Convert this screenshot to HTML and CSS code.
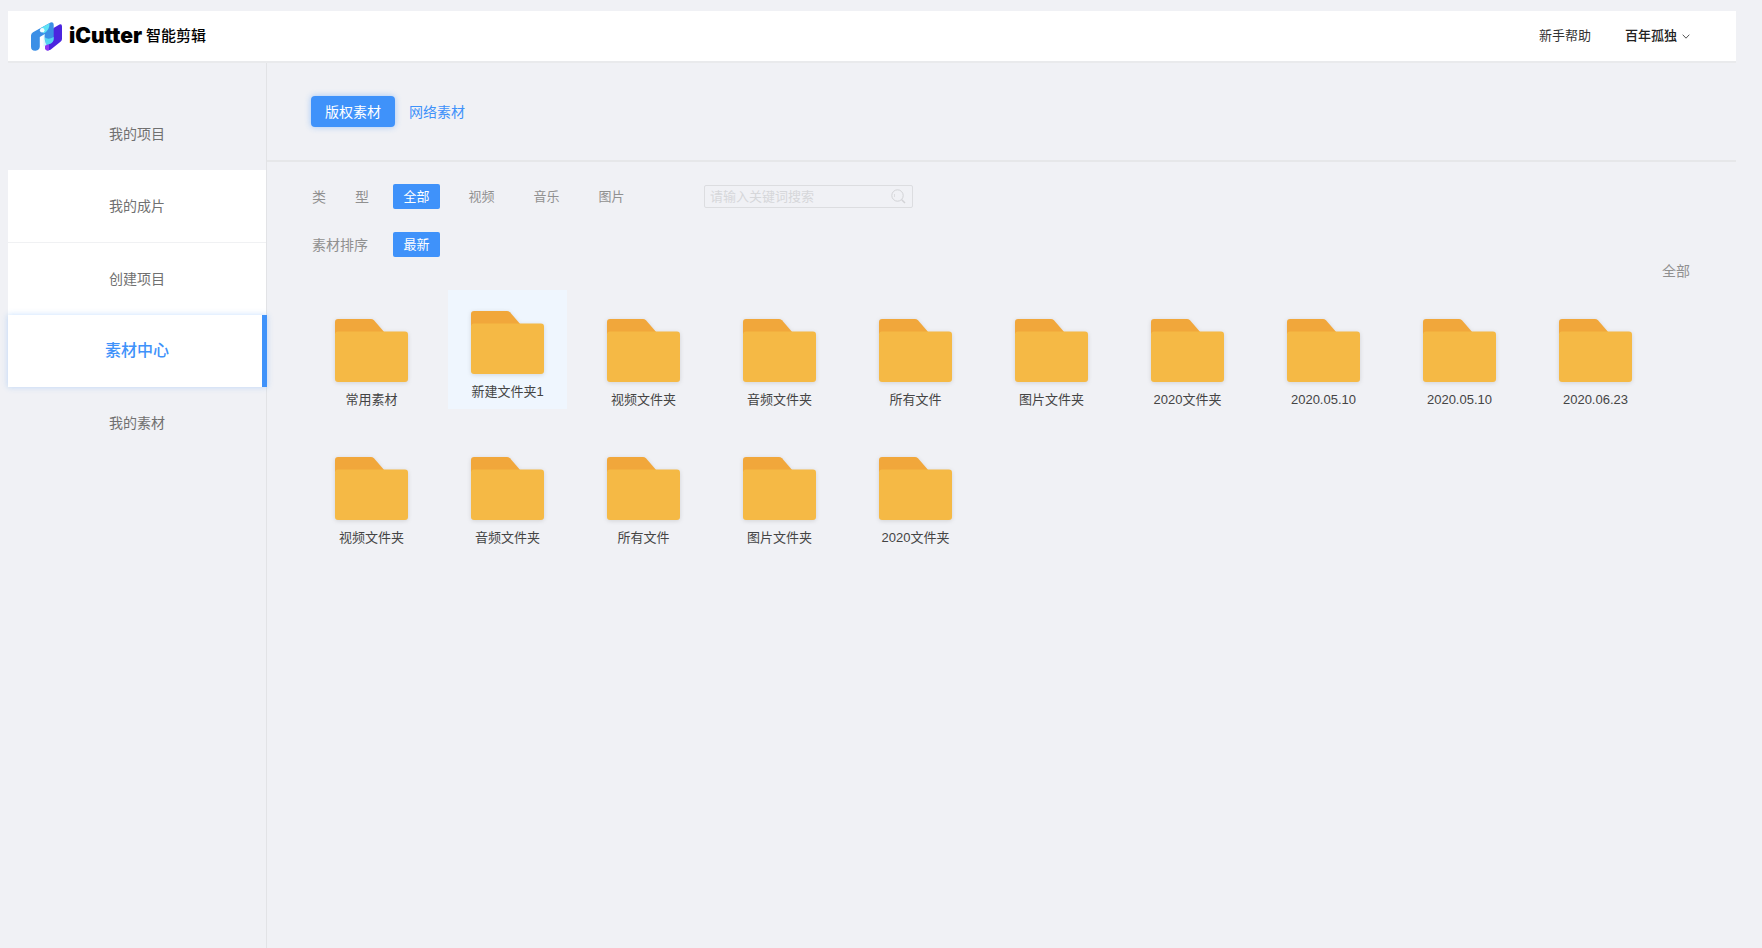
FILE: index.html
```html
<!DOCTYPE html>
<html lang="zh-CN">
<head>
<meta charset="utf-8">
<title>iCutter 智能剪辑</title>
<link rel="stylesheet" href="styles.css">
</head>
<body>
<svg class="defs" width="0" height="0" aria-hidden="true">
  <symbol id="folder" viewBox="0 0 73 63">
    <path d="M0 15V3a3 3 0 0 1 3-3h33q1.500 0 3 1.200L50 14z" fill="#f1a73b"/>
    <rect y="12.500" width="73" height="50.500" rx="3" fill="#f5b945"/>
  </symbol>
</svg>
<div class="app">
  <header class="header">
    <a class="brand" href="#">
      <svg class="brand-logo" viewBox="0 0 31 29" aria-hidden="true">
        <defs>
          <linearGradient id="stem" x1="0" y1="0" x2="1" y2="0">
            <stop offset="0.400" stop-color="#fff"/>
            <stop offset="1" stop-color="#b9f3fb"/>
          </linearGradient>
        </defs>
        <path d="M14 21L22.500 6L28.500 2.500Q31 1.500 31 4.500V17Q31 18.800 29.500 19.800L19.500 27.800Q14 30 14 25z" fill="#4b25df"/>
        <path d="M14 22L18 21.500V28.300Q14 29.200 14 25z" fill="#9038f2"/>
        <path d="M0 13.500Q0 11.500 2 10.300L19.500.6Q22.700-.6 22.700 2.800V16.500Q22.500 20.500 18.500 22L9 24.500Q8.800 27.800 4.500 28.800Q0 29 0 24.500z" fill="#3b8fe6"/>
        <path d="M10 5.900L18.500 1.200Q19 8 12.500 11.500z" fill="#5fe3f5"/>
        <path d="M13.500 15Q17 18.500 22.700 15V17Q22.500 20.500 18.500 22L15 23z" fill="#58d6f1"/>
        <path d="M8.800 15L13.800 12Q13 18 15.500 23L8.800 26.500z" fill="url(#stem)"/>
        <circle cx="11.200" cy="8.300" r="2.300" fill="#eefdff"/>
      </svg>
      <span class="brand-name">iCutter</span>
      <span class="brand-sub">智能剪辑</span>
    </a>
    <nav class="header-nav">
      <a class="help" href="#">新手帮助</a>
      <button class="user" type="button">百年孤独
        <svg class="chevron" viewBox="0 0 8 5" aria-hidden="true"><path d="M.7.7L4 4.200L7.300.7" fill="none" stroke="#555" stroke-width="1"/></svg>
      </button>
    </nav>
  </header>
  <div class="body">
    <nav class="sidebar">
      <a class="side-item" href="#">我的项目</a>
      <a class="side-item side-item-white side-item-line" href="#">我的成片</a>
      <a class="side-item side-item-white" href="#">创建项目</a>
      <a class="side-item side-item-active" href="#" aria-current="page">素材中心</a>
      <a class="side-item" href="#">我的素材</a>
    </nav>
    <main class="main">
      <div class="tabs">
        <button class="tab tab-active" type="button">版权素材</button>
        <button class="tab" type="button">网络素材</button>
      </div>
      <div class="content">
        <div class="filter">
          <span class="filter-label"><span>类</span><span>型</span></span>
          <div class="chips">
            <button class="chip chip-active" type="button">全部</button>
            <button class="chip" type="button">视频</button>
            <button class="chip" type="button">音乐</button>
            <button class="chip" type="button">图片</button>
          </div>
          <form class="search">
            <input class="search-input" type="text" placeholder="请输入关键词搜索" aria-label="请输入关键词搜索">
            <button class="search-button" type="button" aria-label="搜索">
              <svg class="search-icon" viewBox="0 0 15 15" aria-hidden="true"><circle cx="6.500" cy="6.500" r="5.700" fill="none" stroke="#d2d3d6"/><path d="M10.700 10.700L14 14" stroke="#d2d3d6" stroke-width="1.500"/><path d="M3.500 5v3" stroke="#dcdde0"/></svg>
            </button>
          </form>
        </div>
        <div class="filter">
          <span class="filter-label">素材排序</span>
          <div class="chips"><button class="chip chip-active" type="button">最新</button></div>
        </div>
        <a class="all" href="#">全部</a>
        <div class="folders">
          <a class="folder" href="#"><svg class="folder-icon" aria-hidden="true"><use href="#folder"/></svg>常用素材</a>
          <a class="folder folder-selected" href="#"><svg class="folder-icon" aria-hidden="true"><use href="#folder"/></svg>新建文件夹1</a>
          <a class="folder" href="#"><svg class="folder-icon" aria-hidden="true"><use href="#folder"/></svg>视频文件夹</a>
          <a class="folder" href="#"><svg class="folder-icon" aria-hidden="true"><use href="#folder"/></svg>音频文件夹</a>
          <a class="folder" href="#"><svg class="folder-icon" aria-hidden="true"><use href="#folder"/></svg>所有文件</a>
          <a class="folder" href="#"><svg class="folder-icon" aria-hidden="true"><use href="#folder"/></svg>图片文件夹</a>
          <a class="folder" href="#"><svg class="folder-icon" aria-hidden="true"><use href="#folder"/></svg>2020文件夹</a>
          <a class="folder" href="#"><svg class="folder-icon" aria-hidden="true"><use href="#folder"/></svg>2020.05.10</a>
          <a class="folder" href="#"><svg class="folder-icon" aria-hidden="true"><use href="#folder"/></svg>2020.05.10</a>
          <a class="folder" href="#"><svg class="folder-icon" aria-hidden="true"><use href="#folder"/></svg>2020.06.23</a>
          <a class="folder" href="#"><svg class="folder-icon" aria-hidden="true"><use href="#folder"/></svg>视频文件夹</a>
          <a class="folder" href="#"><svg class="folder-icon" aria-hidden="true"><use href="#folder"/></svg>音频文件夹</a>
          <a class="folder" href="#"><svg class="folder-icon" aria-hidden="true"><use href="#folder"/></svg>所有文件</a>
          <a class="folder" href="#"><svg class="folder-icon" aria-hidden="true"><use href="#folder"/></svg>图片文件夹</a>
          <a class="folder" href="#"><svg class="folder-icon" aria-hidden="true"><use href="#folder"/></svg>2020文件夹</a>
        </div>
      </div>
    </main>
  </div>
</div>
</body>
</html>
```

FILE: styles.css
```css
* {
  box-sizing: border-box;
}

body {
  margin: 0;
  background: #f0f1f5;
  color: #707070;
  font: 14px/20px "Liberation Sans", "Noto Sans CJK SC", sans-serif;
}

a {
  color: inherit;
  text-decoration: none;
}

button {
  padding: 0;
  border: 0;
  background: none;
  color: inherit;
  font: inherit;
  cursor: pointer;
}

.defs {
  position: absolute;
}

.app {
  display: flex;
  flex-direction: column;
  min-height: 100vh;
  padding: 11px 26px 0 8px;
}

.header {
  display: flex;
  justify-content: space-between;
  align-items: center;
  height: 52px;
  padding: 0 46px 0 23px;
  border-bottom: 2px solid #e9eaec;
  background: #fff;
}

.brand {
  display: flex;
  align-items: center;
  color: #000;
}

.brand-logo {
  width: 31px;
  height: 29px;
  margin-right: 7px;
}

.brand-name {
  margin-right: 4px;
  font: 900 21px/24px Inter, sans-serif;
}

.brand-sub {
  font-size: 15px;
  font-weight: 500;
}

.header-nav {
  display: flex;
  gap: 34px;
  font-size: 13px;
  color: #333;
}

.user {
  display: flex;
  align-items: center;
  gap: 5px;
  color: #222;
  font-weight: 500;
}

.chevron {
  width: 8px;
  height: 5px;
}

.body {
  display: flex;
  flex: 1;
}

.sidebar {
  flex: none;
  width: 259px;
  padding-top: 35px;
  border-right: 1px solid #e2e3e6;
}

.side-item {
  display: flex;
  justify-content: center;
  align-items: center;
  height: 72px;
}

.side-item-white {
  background: #fff;
}

.side-item-line {
  height: 73px;
  border-bottom: 1px solid #f0f1f3;
}

.side-item-active {
  margin-right: -1px;
  padding-left: 4px;
  border-right: 5px solid #3f92fa;
  background: #fff;
  box-shadow: 0 0 6px rgba(63, 146, 250, 0.3);
  color: #3f92fa;
  font-size: 16px;
  font-weight: 500;
}

.main {
  flex: 1;
  min-width: 0;
}

.tabs {
  display: flex;
  gap: 14px;
  padding: 33px 44px;
  border-bottom: 2px solid #e6e7e9;
}

.tab {
  height: 31px;
  color: #3f92fa;
}

.tab-active {
  padding: 0 14px;
  border-radius: 4px;
  background: #3f92fa;
  box-shadow: 0 0 6px rgba(63, 146, 250, 0.45);
  color: #fff;
}

.content {
  padding: 22px 46px 0 45px;
}

.filter {
  display: flex;
  align-items: center;
  margin-bottom: 23px;
}

.filter-label {
  display: flex;
  justify-content: space-between;
  width: 57px;
  margin-right: 24px;
  color: #909090;
}

.chips {
  display: flex;
  gap: 18px;
}

.chip {
  width: 47px;
  height: 25px;
  border-radius: 2px;
  color: #909090;
  font-size: 13px;
}

.chip-active {
  background: #3f92fa;
  color: #fff;
}

.search {
  display: flex;
  align-items: center;
  width: 209px;
  height: 23px;
  margin-left: 69px;
  padding: 0 6px 0 5px;
  border: 1px solid #dcdde0;
  border-radius: 2px;
}

.search-input {
  flex: 1;
  min-width: 0;
  padding: 0;
  border: 0;
  outline: 0;
  background: none;
  color: #666;
  font: inherit;
  font-size: 13px;
}

.search-input::placeholder {
  color: #d6d7da;
}

.search-button {
  display: flex;
}

.search-icon {
  width: 15px;
  height: 15px;
}

.all {
  display: block;
  width: max-content;
  margin: -19px 0 17px auto;
  color: #909090;
}

.folders {
  display: flex;
  flex-wrap: wrap;
  align-items: flex-start;
  gap: 19px 17px;
}

.folder {
  display: flex;
  flex-direction: column;
  align-items: center;
  gap: 8px;
  width: 119px;
  height: 119px;
  padding-top: 21px;
  color: #444;
  font-size: 13px;
}

.folder-selected {
  margin-top: -8px;
  background: #eff6fe;
}

.folder-icon {
  width: 73px;
  height: 63px;
  filter: drop-shadow(0 1px 2px rgba(0, 0, 0, 0.12));
}
```
